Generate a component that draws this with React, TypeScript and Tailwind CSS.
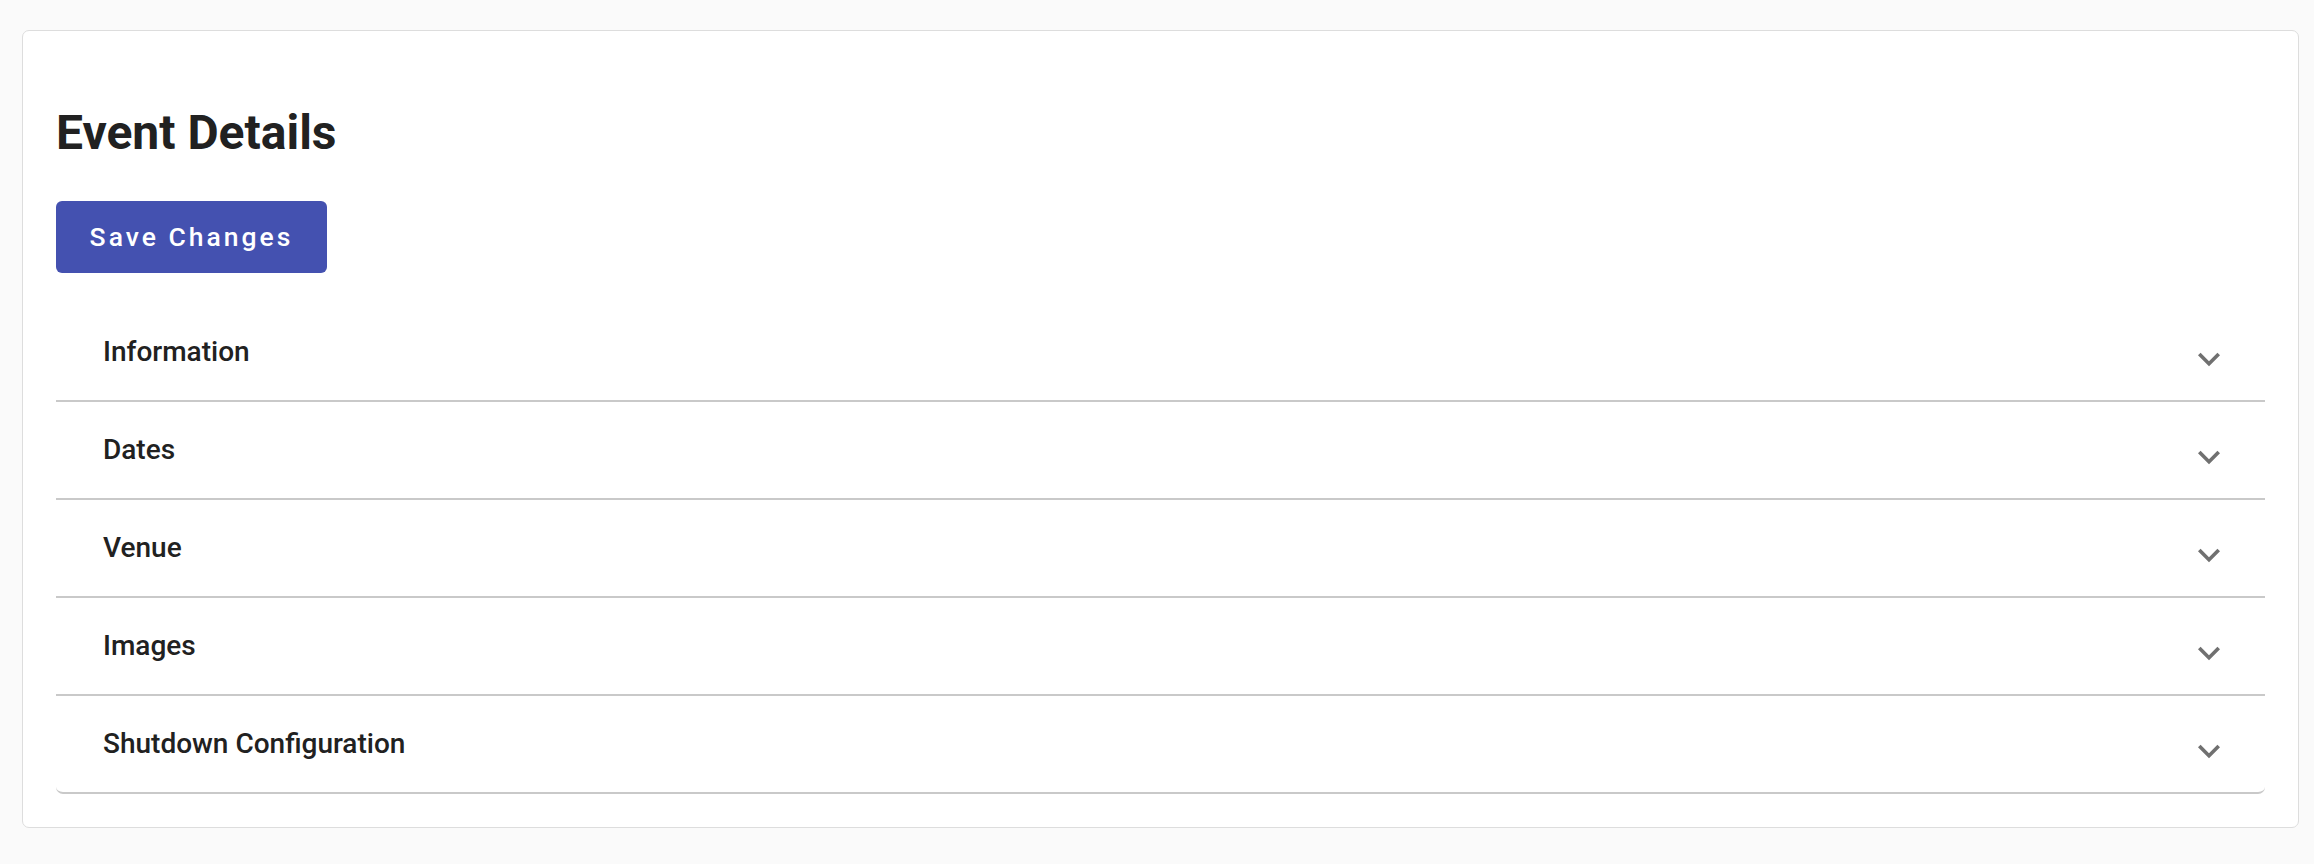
import React from "react";

const sections = ["Information", "Dates", "Venue", "Images", "Shutdown Configuration"];

function ExpandMore() {
  return (
    <svg viewBox="0 0 24 24" className="h-[44px] w-[44px] mt-[13px] shrink-0" fill="#707070" aria-hidden="true">
      <path d="M16.59 8.59 12 13.17 7.41 8.59 6 10l6 6 6-6z" />
    </svg>
  );
}

export default function App() {
  return (
    <div
      className="min-h-screen bg-[#fafafa] pt-[30px] pl-[22px] pr-[15px]"
      style={{ fontFamily: "Roboto, 'Liberation Sans', sans-serif" }}
    >
      <div className="rounded-[7px] border-[1.5px] border-[#dddddd] bg-white px-[33px] pt-[74px] pb-[33px]">
        <h1 className="text-[48px] font-bold leading-[56px] text-[#212121]">Event Details</h1>
        <button className="mt-[40px] flex h-[72px] w-[271px] items-center justify-center rounded-[6px] bg-[#4451b0] text-[26.5px] font-medium tracking-[3px] text-white">
          Save Changes
        </button>
        <div className="mt-[31px]">
          {sections.map((s, i) => (
            <div
              key={s}
              className={
                "flex h-[98px] items-center justify-between border-b-2 border-[#c9c9c9] bg-white pl-[47px] pr-[34px] " +
                (i === sections.length - 1 ? "rounded-b-[7px]" : "")
              }
            >
              <span className="text-[28px] font-medium text-[#212121]">{s}</span>
              <ExpandMore />
            </div>
          ))}
        </div>
      </div>
    </div>
  );
}
